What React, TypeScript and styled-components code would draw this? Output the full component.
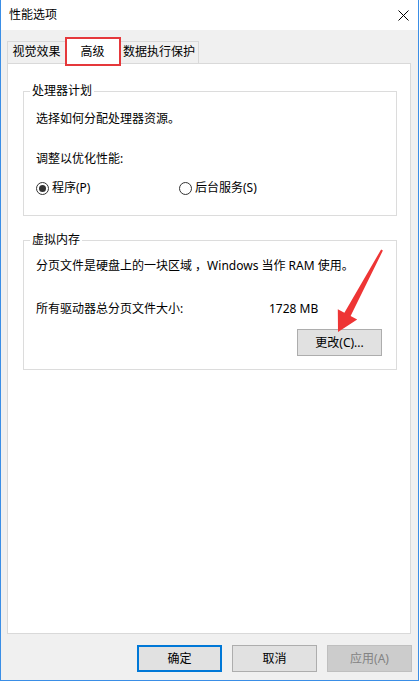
import styled, { createGlobalStyle } from "styled-components";

const GlobalStyle = createGlobalStyle`
  html, body {
    margin: 0;
    padding: 0;
    background: #ffffff;
  }
  * {
    box-sizing: border-box;
  }
`;

const font = `"Noto Sans", "Noto Sans CJK SC", sans-serif`;

const Window = styled.div`
  position: relative;
  width: 419px;
  height: 681px;
  display: flex;
  flex-direction: column;
  background: #f0f0f0;
  border: 1px solid #3a8ee6;
  border-top: none;
  font: 12px/16px ${font};
  color: #000;
`;

const TitleBar = styled.div`
  height: 30px;
  flex: none;
  display: flex;
  align-items: center;
  justify-content: space-between;
  padding: 0 10px 0 8px;
  background: #ffffff;
`;

const Title = styled.span`
  font-size: 12px;
  line-height: 16px;
`;

const CloseButton = styled.div`
  width: 20px;
  height: 20px;
  display: flex;
  align-items: center;
  justify-content: center;
  margin-right: -5px;
`;

const Body = styled.div`
  flex: 1;
  display: flex;
  flex-direction: column;
  padding: 7px 7px 0 6px;
`;

const TabStrip = styled.div`
  height: 26px;
  flex: none;
  display: flex;
  align-items: flex-end;
`;

const Tab = styled.div<{ $active?: boolean; $width: number }>`
  position: relative;
  width: ${({ $width }) => $width}px;
  display: flex;
  justify-content: center;
  align-items: flex-end;
  border: 1px solid #d9d9d9;
  border-bottom: none;
  white-space: nowrap;
  ${({ $active }) =>
    $active
      ? `
    height: 27px;
    margin-bottom: -1px;
    padding-bottom: 4px;
    background: #ffffff;
    z-index: 2;
    &::after {
      content: "";
      position: absolute;
      top: -1px;
      left: -1px;
      right: -2px;
      bottom: -2px;
      border: 2px solid #e5383b;
    }
  `
      : `
    height: 22px;
    padding-bottom: 3px;
    background: #f0f0f0;
  `}
  & + & {
    border-left: none;
  }
`;

const Panel = styled.div`
  flex: 1;
  background: #ffffff;
  border: 1px solid #d9d9d9;
  padding: 20px 13px 0 15px;
  display: flex;
  flex-direction: column;
  gap: 17px;
`;

const GroupBox = styled.fieldset<{ $top: number; $bottom: number }>`
  margin: 0;
  border: 1px solid #dcdcdc;
  padding: ${({ $top, $bottom }) => `${$top}px 14px ${$bottom}px 12px`};
  display: flex;
  flex-direction: column;
  min-width: 0;
`;

const Legend = styled.legend`
  margin-left: -6px;
  padding: 0 2px;
  font-size: 12px;
  line-height: 14px;
`;

const Line = styled.div<{ $gap?: number }>`
  margin-top: ${({ $gap }) => $gap ?? 0}px;
  white-space: nowrap;
`;

const RadioRow = styled.div`
  margin-top: 13px;
  display: grid;
  grid-template-columns: 143px auto;
  align-items: center;
`;

const RadioLabel = styled.label`
  display: flex;
  align-items: center;
  gap: 3px;
`;

const RadioCircle = styled.span<{ $checked?: boolean }>`
  width: 13px;
  height: 13px;
  border: 1px solid #333333;
  border-radius: 50%;
  background: #ffffff;
  display: flex;
  align-items: center;
  justify-content: center;
  &::after {
    content: "";
    width: 7px;
    height: 7px;
    border-radius: 50%;
    background: ${({ $checked }) => ($checked ? "#333333" : "transparent")};
  }
`;

const SizeRow = styled.div`
  margin-top: 27px;
  display: grid;
  grid-template-columns: 233px auto;
  white-space: nowrap;
`;

const ButtonRow = styled.div<{ $gap?: number }>`
  display: flex;
  justify-content: flex-end;
  gap: 10px;
  margin-top: ${({ $gap }) => $gap ?? 0}px;
`;

const Button = styled.button<{ $variant?: "default" | "disabled" }>`
  width: 85px;
  height: 27px;
  padding: 0;
  font: 12px/16px ${font};
  color: #000;
  background: #e1e1e1;
  border: 1px solid #adadad;
  ${({ $variant }) =>
    $variant === "default"
      ? `border: 2px solid #0078d7;`
      : $variant === "disabled"
      ? `background: #cccccc; border-color: #bfbfbf; color: #838383;`
      : ""}
`;

const Footer = styled.div`
  height: 46px;
  flex: none;
  display: flex;
  justify-content: flex-end;
  align-items: flex-start;
  gap: 10px;
  padding: 11px 6px 0 0;
`;

const ArrowMark = styled.svg`
  position: absolute;
  left: 320px;
  top: 245px;
  width: 70px;
  height: 95px;
  pointer-events: none;
`;

export default function App() {
  return (
    <>
      <GlobalStyle />
      <Window>
        <TitleBar>
          <Title>性能选项</Title>
          <CloseButton>
            <svg width="11" height="11" viewBox="0 0 11 11">
              <path d="M0.5 0.5 L10.5 10.5 M10.5 0.5 L0.5 10.5" stroke="#000" strokeWidth="1" />
            </svg>
          </CloseButton>
        </TitleBar>
        <Body>
          <TabStrip>
            <Tab $width={59}>视觉效果</Tab>
            <Tab $width={54} $active>
              高级
            </Tab>
            <Tab $width={79}>数据执行保护</Tab>
          </TabStrip>
          <Panel>
            <GroupBox $top={13} $bottom={19}>
              <Legend>处理器计划</Legend>
              <Line>选择如何分配处理器资源。</Line>
              <Line $gap={24}>调整以优化性能:</Line>
              <RadioRow>
                <RadioLabel>
                  <RadioCircle $checked />
                  程序(P)
                </RadioLabel>
                <RadioLabel>
                  <RadioCircle />
                  后台服务(S)
                </RadioLabel>
              </RadioRow>
            </GroupBox>
            <GroupBox $top={11} $bottom={13}>
              <Legend>虚拟内存</Legend>
              <Line>分页文件是硬盘上的一块区域 ，Windows 当作 RAM 使用。</Line>
              <SizeRow>
                <span>所有驱动器总分页文件大小:</span>
                <span>1728 MB</span>
              </SizeRow>
              <ButtonRow $gap={12}>
                <Button>更改(C)...</Button>
              </ButtonRow>
            </GroupBox>
          </Panel>
        </Body>
        <Footer>
          <Button $variant="default">确定</Button>
          <Button>取消</Button>
          <Button $variant="disabled">应用(A)</Button>
        </Footer>
        <ArrowMark viewBox="0 0 70 95">
          <polygon
            points="61.9,5.5 29.6,71.1 36.2,74.6 17,87 16.8,64.2 23.4,67.7 60.1,4.5"
            fill="#ee3535"
          />
        </ArrowMark>
      </Window>
    </>
  );
}
